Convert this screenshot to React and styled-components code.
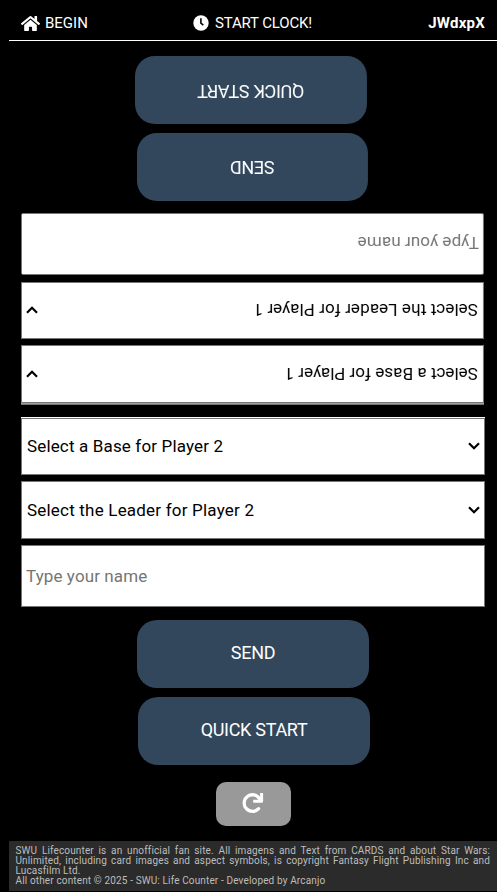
import React from 'react';
import styled, { createGlobalStyle } from 'styled-components';

const GlobalStyle = createGlobalStyle`
  * { box-sizing: border-box; }
  body {
    margin: 0 0 0 9px;
    background: #000;
    color: #fff;
    font-family: Roboto, sans-serif;
  }
`;

const Page = styled.div`
  display: flex;
  flex-direction: column;
  height: 892px;
  overflow: hidden;
`;

const Header = styled.header`
  display: grid;
  grid-template-columns: 172px 1fr auto;
  align-items: center;
  height: 41px;
  padding: 6px 12px 0 12px;
  border-bottom: 1px solid #fff;
  font-size: 15px;
`;

const HeaderItem = styled.div`
  display: flex;
  align-items: center;
  letter-spacing: ${(p) => p.$tracking || 0}px;
  font-weight: ${(p) => (p.$bold ? 700 : 400)};
  white-space: nowrap;
  svg { margin-right: ${(p) => p.$gap || 0}px; }
`;

const Player = styled.section`
  display: flex;
  flex-direction: column;
  width: ${(p) => p.$width}px;
  margin: ${(p) => p.$margin};
  transform: ${(p) => (p.$flipped ? 'rotate(180deg)' : 'none')};
`;

const Field = styled.div`
  display: flex;
  align-items: center;
  justify-content: space-between;
  flex: none;
  height: ${(p) => p.$height}px;
  margin-bottom: ${(p) => p.$after}px;
  padding: ${(p) => p.$padding || '0 4px 0 5px'};
  background: #fff;
  border: 1px solid #767676;
  border-radius: ${(p) => (p.$round ? '2px' : '0')};
  color: ${(p) => (p.$placeholder ? '#757575' : '#000')};
  font-size: 17px;
  line-height: 20px;
  letter-spacing: ${(p) => p.$tracking}px;
`;

const Edge = styled.div`
  height: 1px;
  background: ${(p) => p.$color};
`;

const Button = styled.button`
  flex: none;
  width: ${(p) => p.$width}px;
  height: 68px;
  margin: 0 0 9px ${(p) => p.$left}px;
  padding: 0 0 ${(p) => p.$lift}px;
  border: 0;
  border-radius: 20px;
  background: #32475c;
  color: #fff;
  font: 400 18px Roboto, sans-serif;
  letter-spacing: -0.3px;
`;

const Restart = styled.button`
  display: flex;
  align-items: center;
  justify-content: center;
  align-self: flex-start;
  flex: none;
  width: 75px;
  height: 44px;
  margin: 8px 0 0 207px;
  padding: 0 1px 2px 0;
  border: 0;
  border-radius: 10px;
  background: #999;
`;

const Footer = styled.footer`
  height: 50px;
  margin-top: 15px;
  padding: 5px 7px 0 6.5px;
  background: #2b2b2b;
  color: #bdbdbd;
  font-size: 10px;
  line-height: 10px;
  letter-spacing: 0.14px;
  text-align: justify;
`;

const HomeIcon = () => (
  <svg width="19" height="17" viewBox="0 0 576 512" fill="#fff">
    <path d="M280 148 96 300v164a16 16 0 0 0 16 16l112-.3a16 16 0 0 0 16-16V368a16 16 0 0 1 16-16h64a16 16 0 0 1 16 16v95.600a16 16 0 0 0 16 16.100L464 480a16 16 0 0 0 16-16V300L296 148a12 12 0 0 0-16 0zM572 251l-84-69V44a12 12 0 0 0-12-12h-56a12 12 0 0 0-12 12v72l-90-74a48 48 0 0 0-61 0L4 251a12 12 0 0 0-2 17l26 31a12 12 0 0 0 17 2L280 107a12 12 0 0 1 15 0l235 194a12 12 0 0 0 17-2l26-31a12 12 0 0 0-1-17z" />
  </svg>
);

const ClockIcon = () => (
  <svg width="16" height="16" viewBox="0 0 16 16">
    <circle cx="8" cy="8" r="7.700" fill="#fff" />
    <path d="M7.900 3.200v5l2.400 1.900" fill="none" stroke="#000" strokeWidth="1.600" />
  </svg>
);

const Chevron = () => (
  <svg width="12" height="8" viewBox="0 0 12 8">
    <path d="M1 1.300 6 6.200l5-4.900" fill="none" stroke="#000" strokeWidth="2.200" />
  </svg>
);

const RestartIcon = () => (
  <svg width="22" height="22" viewBox="0 0 22 22" fill="none" stroke="#fff">
    <path d="M16.600 16.700A8.300 8.300 0 1 1 17.400 6.500" strokeWidth="3.300" strokeLinecap="round" />
    <path d="M19.600 1v8.200h-8.400" strokeWidth="3" strokeLinejoin="round" />
  </svg>
);

export default function App() {
  return (
    <Page>
      <GlobalStyle />
      <Header>
        <HeaderItem $gap={5}><HomeIcon />BEGIN</HeaderItem>
        <HeaderItem $gap={6} $tracking={-0.15}><ClockIcon />START CLOCK!</HeaderItem>
        <HeaderItem $bold $tracking={0.25}>JWdxpX</HeaderItem>
      </Header>

      <Player $flipped $width={463} $margin="6px 0 12px 12px">
        <Edge $color="#767676" />
        <Edge $color="#a0a0a0" />
        <Field $height={58} $after={6} $tracking={0.05}>Select a Base for Player 1<Chevron /></Field>
        <Field $height={57} $after={7} $tracking={0.12}>Select the Leader for Player 1<Chevron /></Field>
        <Field $height={62} $after={12} $round $placeholder $padding="2px 4px 0" $tracking={0.1}>Type your name</Field>
        <Button $width={231} $left={116} $lift={2}>SEND</Button>
        <Button $width={232} $left={117} $lift={3}>QUICK START</Button>
      </Player>

      <Player $width={464} $margin="0 0 0 12px">
        <Edge $color="#fff" />
        <Field $height={57} $after={6} $padding="0 4px 1px 5px" $tracking={0.15}>Select a Base for Player 2<Chevron /></Field>
        <Field $height={58} $after={6} $tracking={0.2}>Select the Leader for Player 2<Chevron /></Field>
        <Field $height={62} $after={13} $placeholder $padding="0 4px" $tracking={0.1}>Type your name</Field>
        <Button $width={232} $left={116} $lift={4}>SEND</Button>
        <Button $width={232} $left={117} $lift={4}>QUICK START</Button>
      </Player>

      <Restart aria-label="Restart"><RestartIcon /></Restart>

      <Footer>
        SWU Lifecounter is an unofficial fan site. All imagens and Text from CARDS and about Star Wars: Unlimited, including card images and aspect symbols, is copyright Fantasy Flight Publishing Inc and Lucasfilm Ltd.
        <br />
        All other content © 2025 - SWU: Life Counter - Developed by Arcanjo
      </Footer>
    </Page>
  );
}
